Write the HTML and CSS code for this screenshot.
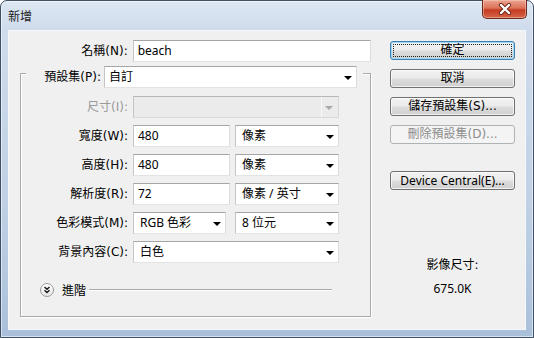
FILE: index.html
```html
<!DOCTYPE html>
<html lang="zh-Hant">
<head>
<meta charset="utf-8">
<title>新增</title>
<link rel="stylesheet" href="styles.css">
</head>
<body>
<div class="window">
  <div class="titlebar">
    <span class="title cjk">新增</span>
    <div class="close">
      <svg width="16" height="12" viewBox="0 0 16 12">
        <path d="M4 2 L12 10 M12 2 L4 10" stroke="#6a2414" stroke-width="4.2" stroke-linecap="round" fill="none"/>
        <path d="M4 2 L12 10 M12 2 L4 10" stroke="#ffffff" stroke-width="2.4" stroke-linecap="round" fill="none"/>
      </svg>
    </div>
  </div>
  <div class="client">
    <div class="form">
      <div class="name-row">
        <label class="lbl name-lbl">名稱(N):</label>
        <div class="field w-name">beach</div>
      </div>
      <div class="group">
        <div class="group-head">
          <label class="lbl">預設集(P):</label>
          <div class="field select preset w-preset">自訂<span class="arrow"></span></div>
        </div>
        <div class="rows">
          <div class="row">
            <label class="lbl disabled">尺寸(I):</label>
            <div class="ctrls"><div class="field select dis w-full"><span class="dis-btn"><span class="arrow grey"></span></span></div></div>
          </div>
          <div class="row">
            <label class="lbl">寬度(W):</label>
            <div class="ctrls"><div class="field w-num">480</div><div class="field select w-unit">像素<span class="arrow"></span></div></div>
          </div>
          <div class="row">
            <label class="lbl">高度(H):</label>
            <div class="ctrls"><div class="field w-num">480</div><div class="field select w-unit">像素<span class="arrow"></span></div></div>
          </div>
          <div class="row">
            <label class="lbl">解析度(R):</label>
            <div class="ctrls"><div class="field w-num">72</div><div class="field select w-unit">像素 / 英寸<span class="arrow"></span></div></div>
          </div>
          <div class="row">
            <label class="lbl">色彩模式(M):</label>
            <div class="ctrls wide-gap"><div class="field select w-mode">RGB 色彩<span class="arrow"></span></div><div class="field select w-unit">8 位元<span class="arrow"></span></div></div>
          </div>
          <div class="row">
            <label class="lbl">背景內容(C):</label>
            <div class="ctrls"><div class="field select w-full">白色<span class="arrow"></span></div></div>
          </div>
        </div>
        <div class="advanced">
          <span class="toggle">
            <svg width="14" height="14" viewBox="0 0 14 14">
              <path d="M4.5 4 L7 6.3 L9.5 4 M4.5 7.2 L7 9.5 L9.5 7.2" stroke="#1a1a1a" stroke-width="1.4" fill="none"/>
            </svg>
          </span>
          <span class="adv-text">進階</span>
          <span class="adv-line"></span>
        </div>
      </div>
    </div>
    <div class="side">
      <button class="btn default cjk"><span class="focus">確定</span></button>
      <button class="btn cjk">取消</button>
      <button class="btn cjk">儲存預設集(S)...</button>
      <button class="btn cjk disabled-btn">刪除預設集(D)...</button>
      <button class="btn device">Device Central(E)...</button>
      <div class="info cjk">影像尺寸:</div>
      <div class="info size">675.0K</div>
    </div>
  </div>
</div>
</body>
</html>
```

FILE: styles.css
```css
* { box-sizing: border-box; margin: 0; padding: 0; }

body {
  width: 534px;
  height: 338px;
  overflow: hidden;
  background: #ffffff;
  font-family: "Noto Sans", "Noto Sans CJK TC", sans-serif;
  font-size: 12px;
  color: #000;
}

.cjk, .lbl {
  font-family: "DejaVu Sans", "Noto Sans CJK TC", sans-serif;
}

.window {
  width: 534px;
  height: 338px;
  border: 1px solid #3e4f66;
  border-radius: 7px 7px 0 0;
  background: linear-gradient(180deg, #dde7f3 0px, #cfdcec 28px, #c0d1e5 60%, #aac0da 100%);
  box-shadow: inset 0 0 0 1px rgba(255,255,255,0.55);
  display: flex;
  flex-direction: column;
}

.titlebar {
  height: 29px;
  display: flex;
  align-items: flex-start;
  padding: 0 6px 0 7px;
}

.title {
  margin-top: 6px;
  font-size: 12px;
  color: #1b1b1b;
}

.close {
  margin-left: auto;
  width: 45px;
  height: 19px;
  margin-top: -1px;
  border: 1px solid #6b2a1e;
  border-top: none;
  border-radius: 0 0 5px 5px;
  background: linear-gradient(180deg, #eba490 0%, #dc725a 45%, #c53b22 55%, #d6644a 100%);
  box-shadow: inset 0 0 0 1px rgba(255,220,200,0.45);
  display: flex;
  align-items: center;
  justify-content: center;
}

.client {
  flex: 1;
  margin: 0 7px 7px 7px;
  border: 1px solid #f4f7fb;
  background: #f0f0f0;
  display: flex;
}

.form {
  width: 362px;
  padding: 9px 0 0 11px;
}

.lbl {
  display: block;
  text-align: right;
  line-height: 22px;
  white-space: nowrap;
}

.lbl.disabled { color: #9a9a9a; }

.name-row {
  display: flex;
  gap: 5px;
  height: 22px;
}

.name-lbl { width: 108px; }

.field {
  height: 22px;
  background: #fff;
  border: 1px solid;
  border-color: #a6a6a6 #dcdcdc #e3e3e3 #c6c6c6;
  line-height: 20px;
  padding-left: 4px;
  position: relative;
  white-space: nowrap;
}

.field.select { padding-left: 6px; }
.field.select.preset { padding-left: 4px; }

.w-name { width: 239px; }
.w-preset { width: 253px; }
.w-full { width: 206px; }
.w-num { width: 97px; }
.w-unit { width: 104px; }
.w-mode { width: 93px; }

.arrow {
  position: absolute;
  right: 4px;
  top: 9px;
  width: 0;
  height: 0;
  border-left: 4px solid transparent;
  border-right: 4px solid transparent;
  border-top: 4px solid #000;
}

.arrow.grey { border-top-color: #a8a8a8; right: 5px; }

.field.dis {
  background: #ebebeb;
  border-color: #b7b7b7 #d8d8d8 #d8d8d8 #c4c4c4;
}

.dis-btn {
  position: absolute;
  right: 0;
  top: 0;
  bottom: 0;
  width: 17px;
  border-left: 1px solid #f8f8f8;
}

.group {
  margin-top: 11px;
  width: 351px;
  height: 244px;
  border: 1px solid #a9a9a9;
  box-shadow: inset 1px 1px 0 #ffffff, 1px 1px 0 #ffffff;
}

.group-head {
  margin: -8px 7px 0 5px;
  height: 22px;
  background: #f0f0f0;
  display: flex;
  justify-content: flex-end;
  gap: 3px;
  padding-right: 6px;
}

.rows {
  margin-top: 8px;
  display: flex;
  flex-direction: column;
  gap: 7px;
}

.row {
  display: flex;
  gap: 5px;
}

.row .lbl { width: 107px; }

.ctrls {
  display: flex;
  gap: 5px;
}

.ctrls.wide-gap { gap: 9px; }

.advanced {
  margin-top: 20px;
  height: 14px;
  display: flex;
  align-items: center;
  padding-left: 19px;
}

.toggle {
  width: 14px;
  height: 14px;
  border-radius: 50%;
  border: 1px solid #9a9a9a;
  background: linear-gradient(180deg, #ffffff, #e6e6e6);
  display: flex;
  align-items: center;
  justify-content: center;
}

.toggle svg { display: block; margin: -1px; }

.adv-text {
  margin-left: 8px;
  line-height: 14px;
  font-family: "Noto Sans CJK TC", sans-serif;
}

.adv-line {
  margin-left: 3px;
  width: 243px;
  height: 2px;
  border-top: 1px solid #a9a9a9;
  border-bottom: 1px solid #ffffff;
}

.side {
  margin-left: 19px;
  width: 125px;
  padding-top: 10px;
  display: flex;
  flex-direction: column;
  gap: 9px;
}

.btn {
  height: 19px;
  width: 125px;
  font-size: 12px;
  color: #000;
  border: 1px solid #707070;
  border-radius: 3px;
  background: linear-gradient(180deg, #f2f2f2 0%, #ebebeb 48%, #dddddd 52%, #cfcfcf 100%);
  box-shadow: inset 0 0 0 1px rgba(255,255,255,0.7);
  display: flex;
  align-items: center;
  justify-content: center;
  line-height: 15px;
  padding: 0;
}

.btn.device {
  font-family: "Noto Sans", sans-serif;
  margin-top: 18px;
}

.btn.default {
  border-color: #3c7fb1;
  box-shadow: inset 0 0 0 1px #9fd5f5;
  padding: 2px;
}

.focus {
  display: flex;
  width: 100%;
  height: 100%;
  align-items: center;
  justify-content: center;
  outline: 1px dotted #222;
  outline-offset: -1px;
}

.btn.disabled-btn {
  border-color: #adb2b5;
  background: #f4f4f4;
  color: #8c8c8c;
  box-shadow: none;
}

.info {
  text-align: center;
  line-height: 16px;
  margin-top: 58px;
}

.info.size { margin-top: -1px; }
```
